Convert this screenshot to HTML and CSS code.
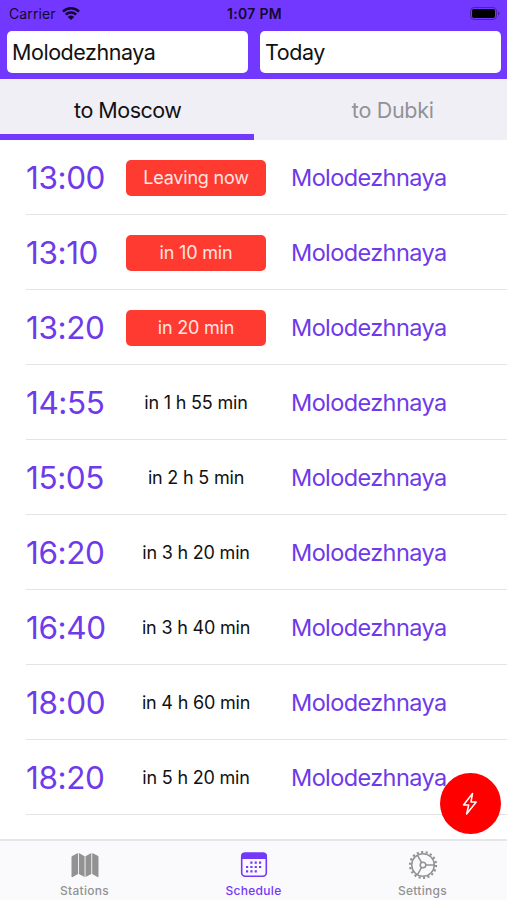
FILE: index.html
```html
<!DOCTYPE html>
<html lang="en">

<head>
    <meta charset="UTF-8">
    <title>Schedule</title>
    <link rel="stylesheet" href="styles.css">
</head>

<body>
    <div class="header">
        <div class="status">
            <div class="carrier">
                <span>Carrier</span>
                <svg class="wifi" width="18" height="13" viewBox="0 0 18 13">
                    <path d="M1 4.600a11.500 11.500 0 0 1 16 0M3.800 7.600a7.500 7.500 0 0 1 10.400 0" fill="none" stroke="#14082e" stroke-width="2.500" />
                    <path d="M9 13L5.800 9.900a4.500 4.500 0 0 1 6.400 0z" fill="#14082e" />
                </svg>
            </div>
            <div class="clock">1:07 PM</div>
            <div class="power">
                <svg width="30" height="13" viewBox="0 0 30 13">
                    <rect x=".5" y=".5" width="26" height="12" rx="3.5" fill="none" stroke="#4c22a8" />
                    <rect x="2" y="2" width="23" height="9" rx="2" fill="#000" />
                    <path d="M28 4.500v4q1.400-.6 1.400-2t-1.400-2z" fill="#4c22a8" />
                </svg>
            </div>
        </div>
        <div class="filters">
            <div class="field">Molodezhnaya</div>
            <div class="field">Today</div>
        </div>
    </div>
    <div class="tabs">
        <div class="tab active">to Moscow</div>
        <div class="tab">to Dubki</div>
    </div>
    <ul class="list">
        <li><span class="time">13:00</span><span class="left soon">Leaving now</span><span class="stop">Molodezhnaya</span></li>
        <li><span class="time">13:10</span><span class="left soon">in 10 min</span><span class="stop">Molodezhnaya</span></li>
        <li><span class="time">13:20</span><span class="left soon">in 20 min</span><span class="stop">Molodezhnaya</span></li>
        <li><span class="time">14:55</span><span class="left">in 1 h 55 min</span><span class="stop">Molodezhnaya</span></li>
        <li><span class="time">15:05</span><span class="left">in 2 h 5 min</span><span class="stop">Molodezhnaya</span></li>
        <li><span class="time">16:20</span><span class="left">in 3 h 20 min</span><span class="stop">Molodezhnaya</span></li>
        <li><span class="time">16:40</span><span class="left">in 3 h 40 min</span><span class="stop">Molodezhnaya</span></li>
        <li><span class="time">18:00</span><span class="left">in 4 h 60 min</span><span class="stop">Molodezhnaya</span></li>
        <li><span class="time">18:20</span><span class="left">in 5 h 20 min</span><span class="stop">Molodezhnaya</span></li>
    </ul>
    <!-- floating button -->
    <div class="flash">
        <svg width="16" height="24" viewBox="0 0 16 24">
            <path d="M10.500 1.500L1.500 13h5.200L4.600 22l9.600-12H9z" fill="none" stroke="#fff" stroke-width="1.500" stroke-linejoin="round" />
        </svg>
    </div>
    <div class="bar">
        <div class="item">
            <svg width="30" height="30" viewBox="0 0 30 30" fill="#929292">
                <path d="M1.500 7.300q0-.8.700-1.200L8 3v21l-5.300 3q-1.200.5-1.200-.8zM8.900 3l5.700 3.200V27l-5.700-3.100zM15.500 6.200L21.300 3v21l-5.800 3zM22.200 3l5.600 2.800q.7.400.7 1.200v19.200q0 1.300-1 .8l-5.300-3z" />
            </svg>
            <span>Stations</span>
        </div>
        <div class="item current">
            <svg width="30" height="30" viewBox="0 0 30 30" fill="#7338f8">
                <rect x="2.700" y="3.200" width="24.600" height="23.100" rx="3.500" fill="none" stroke="#7338f8" stroke-width="1.600" />
                <path d="M2 9V6Q2 2.500 5.500 2.500h19Q28 2.500 28 6v3z" />
                <path d="M11.300 12.700h13M7 17h17.300M7 21.300h13" fill="none" stroke="#7338f8" stroke-width="2.200" stroke-dasharray="2.200 2.130" />
            </svg>
            <span>Schedule</span>
        </div>
        <div class="item">
            <svg width="30" height="30" viewBox="0 0 30 30" fill="none" stroke="#929292">
                <circle cx="15" cy="15" r="11.300" stroke-width="1.500" />
                <circle cx="15" cy="15" r="13" stroke-width="2.200" stroke-dasharray="2.100 2.438" />
                <circle cx="15" cy="15" r="2.800" stroke-width="1.500" />
                <path d="M17.800 15h8.500M13.600 12.600L9.400 5.200M13.600 17.400l-4.200 7.400" stroke-width="1.500" />
            </svg>
            <span>Settings</span>
        </div>
    </div>
</body>

</html>
```

FILE: styles.css
```css
* {
    padding: 0;
    margin: 0;
    box-sizing: border-box;
}

body {
    display: flex;
    flex-direction: column;
    height: 900px;
    overflow: hidden;
    background: #ffffff;
    color: #111111;
    font-family: Inter, "Liberation Sans", sans-serif;
}

.header {
    height: 79px;
    background: #7338ff;
}

.status {
    display: grid;
    grid-template-columns: 1fr 1fr 1fr;
    align-items: center;
    height: 31px;
    padding: 0 7px 4px 9px;
    font-size: 14px;
    color: #14082e;
}

.carrier {
    display: flex;
    align-items: center;
    gap: 6px;
    letter-spacing: 0.1px;
}

.clock {
    text-align: center;
    font-weight: 600;
    letter-spacing: 0.3px;
}

.power {
    display: flex;
    justify-content: flex-end;
}

.filters {
    display: flex;
    gap: 12px;
    padding: 0 6px 0 7px;
}

.field {
    flex: 1;
    height: 42px;
    padding-left: 5px;
    line-height: 43px;
    font-size: 21.5px;
    letter-spacing: -0.45px;
    background: #ffffff;
    border-radius: 5px;
}

.tabs {
    display: flex;
    height: 61px;
    background: #f0eff5;
}

.tab {
    width: 50%;
    padding: 3px 0 0 25px;
    line-height: 56px;
    font-size: 21.5px;
    letter-spacing: -0.3px;
    text-align: center;
    color: #929297;
}

.active {
    padding-left: 2px;
    letter-spacing: -0.5px;
    color: #111111;
    border-bottom: 6px solid #7338ff;
}

.list {
    flex: 1;
    padding-left: 26px;
    list-style: none;
}

.list li {
    display: flex;
    align-items: center;
    height: 75px;
    padding-top: 2px;
    border-bottom: 1px solid #e4e4e6;
}

.time {
    width: 100px;
    margin-bottom: 2px;
    font-size: 31.5px;
    letter-spacing: -0.4px;
    color: #6e3aea;
}

.left {
    width: 140px;
    height: 36px;
    margin-right: 25px;
    line-height: 36px;
    font-size: 18px;
    letter-spacing: -0.2px;
    text-align: center;
}

.soon {
    color: #ffe5e2;
    background: #ff3a30;
    border-radius: 5px;
}

.stop {
    margin-bottom: 2px;
    font-size: 23.5px;
    letter-spacing: -0.6px;
    color: #6e3aea;
}

.flash {
    display: flex;
    align-items: center;
    justify-content: center;
    position: absolute;
    left: 440px;
    top: 773px;
    width: 61px;
    height: 61px;
    padding-right: 2px;
    background: #ff0000;
    border-radius: 50%;
}

.bar {
    display: flex;
    height: 61px;
    border-top: 2px solid #e6e6e8;
    background: #fafafc;
}

.item {
    flex: 1;
    display: flex;
    flex-direction: column;
    align-items: center;
    padding-top: 9px;
    font-size: 12px;
    font-weight: 500;
    line-height: 22px;
    letter-spacing: 0.3px;
    color: #929292;
}

.item svg {
    flex-shrink: 0;
}

.current {
    color: #7338f8;
}
```
